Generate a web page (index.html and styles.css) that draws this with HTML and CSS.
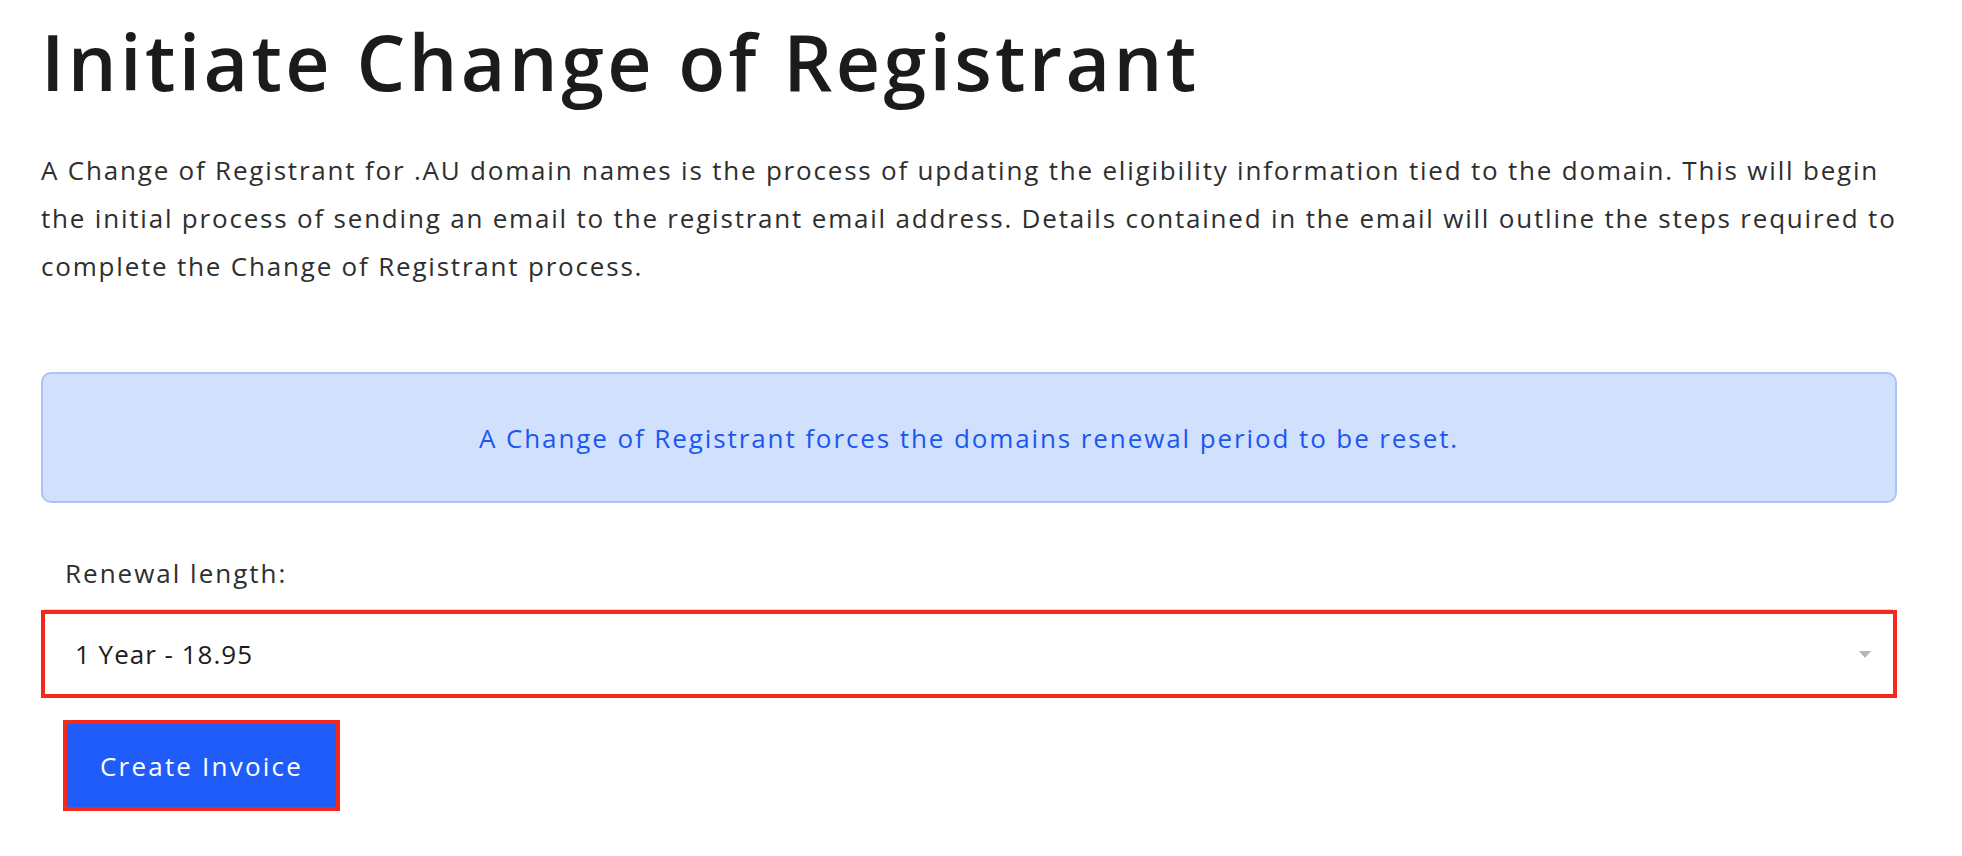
FILE: index.html
```html
<!DOCTYPE html>
<html lang="en">
<head>
<meta charset="utf-8">
<title>Initiate Change of Registrant</title>
<link rel="stylesheet" href="styles.css">
</head>
<body>
<main class="page">
  <h1 class="title">Initiate Change of Registrant</h1>
  <p class="intro">A Change of Registrant for .AU domain names is the process of updating the eligibility information tied to the domain. This will begin<br>the initial process of sending an email to the registrant email address. Details contained in the email will outline the steps required to<br>complete the Change of Registrant process.</p>
  <div class="alert">A Change of Registrant forces the domains renewal period to be reset.</div>
  <form class="form">
    <label class="label">Renewal length:</label>
    <div class="select">
      <span class="select-value">1 Year - 18.95</span>
      <svg class="caret" width="12" height="7" viewBox="0 0 12 7"><path d="M0 0h12L6 7z" fill="#b1b6bf"/></svg>
    </div>
    <div class="actions">
      <button type="button" class="btn">Create Invoice</button>
    </div>
  </form>
</main>
</body>
</html>
```

FILE: styles.css
```css
html, body {
  margin: 0;
  padding: 0;
  background: #ffffff;
}
body {
  font-family: "Open Sans", "Liberation Sans", sans-serif;
  color: #2b2b2b;
}
.page {
  padding: 0 65px 0 41px;
}
.title {
  margin: 0;
  padding-top: 14px;
  font-size: 77px;
  font-weight: 600;
  line-height: 96px;
  color: #1b1b1b;
  letter-spacing: 3.35px;
}
.intro {
  margin: 36px 0 0 0;
  font-size: 26px;
  line-height: 48px;
  letter-spacing: 1.8px;
  color: #2e2e2e;
  white-space: nowrap;
}
.alert {
  margin-top: 82px;
  height: 127px;
  display: flex;
  align-items: center;
  justify-content: center;
  background: #d1e0fc;
  border: 2px solid #a9c4f6;
  border-radius: 10px;
  color: #1a57f2;
  font-size: 26px;
  letter-spacing: 1.9px;
}
.form {
  margin-top: 0;
}
.label {
  display: block;
  padding: 54px 0 0 24px;
  font-size: 26px;
  line-height: 32px;
  letter-spacing: 2px;
  color: #2e2e2e;
}
.select {
  margin-top: 21px;
  height: 80px;
  border: 4px solid #f4291d;
  box-shadow: 0 -5px 0 -4px #d8d8d8;
  display: flex;
  align-items: center;
  justify-content: space-between;
  padding: 0 22px 0 30px;
  font-size: 26px;
  letter-spacing: 1px;
  color: #1c1c1c;
}
.caret {
  display: block;
}
.actions {
  padding: 22px 0 0 22px;
}
.btn {
  width: 277px;
  height: 91px;
  border: 4px solid #f4291d;
  background: #1f5cfa;
  color: #ffffff;
  font-family: "Open Sans", "Liberation Sans", sans-serif;
  font-size: 26px;
  font-weight: 500;
  letter-spacing: 2.2px;
  padding: 0;
  cursor: pointer;
}
```
